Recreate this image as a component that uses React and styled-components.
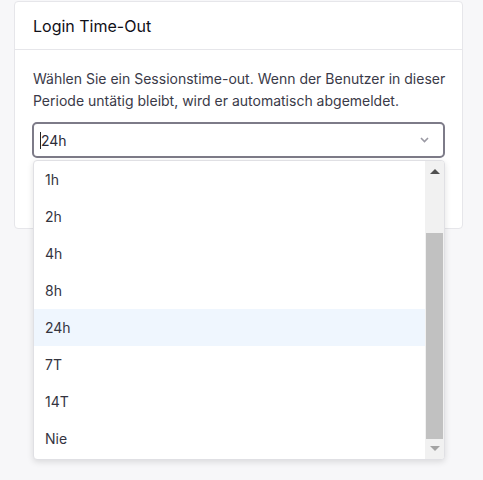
import React from "react";
import styled, { createGlobalStyle } from "styled-components";

const Global = createGlobalStyle`
  html, body { margin: 0; padding: 0; background: #f7f7f9; }
  body { font-family: Inter, "Noto Sans", sans-serif; color: #2b2b38; }
`;

const Page = styled.div`
  width: 483px;
  height: 480px;
  padding: 1px 20px 0 14px;
  box-sizing: border-box;
`;

const Card = styled.section`
  background: #fff;
  border: 1px solid #e6e6ea;
  border-radius: 4px;
  height: 228px;
  box-sizing: border-box;
`;

const CardHeader = styled.header`
  height: 47px;
  display: flex;
  align-items: center;
  padding: 0 18px;
  border-bottom: 1px solid #e6e6ea;
  font-size: 16px;
  font-weight: 400;
  color: #101018;
`;

const CardBody = styled.div`
  padding: 18px 17px 0 17px;
`;

const Text = styled.p`
  margin: 0 0 10px 1px;
  font-size: 14px;
  line-height: 22px;
  color: #3a3a48;
  white-space: nowrap;
`;

const TextLine = styled.span`
  display: block;
`;

const SelectWrap = styled.div`
  position: relative;
`;

const SelectBox = styled.div`
  height: 36px;
  box-sizing: border-box;
  border: 2px solid #7d7b88;
  border-radius: 5px;
  display: flex;
  align-items: center;
  padding: 0 14px 0 6px;
  font-size: 14px;
  color: #2b2b38;
`;

const Caret = styled.span`
  display: inline-block;
  width: 1px;
  height: 17px;
  background: #222;
`;

const Value = styled.span`
  flex: 1;
`;

const Dropdown = styled.div`
  position: absolute;
  left: 1px;
  top: 38px;
  width: 412px;
  height: 300px;
  box-sizing: border-box;
  background: #fff;
  border: 1px solid #e0e0e4;
  border-radius: 4px;
  box-shadow: 0 2px 6px rgba(0, 0, 0, 0.12);
  display: flex;
  overflow: hidden;
  z-index: 2;
`;

const List = styled.ul`
  flex: 1;
  list-style: none;
  margin: 0;
  padding: 0;
`;

const Item = styled.li`
  height: 37px;
  display: flex;
  align-items: center;
  padding-left: 11px;
  font-size: 14px;
  color: #34343f;
  background: ${(p) => (p.$active ? "#eff6fe" : "transparent")};
`;

const Scrollbar = styled.div`
  width: 19px;
  background: #f1f1f1;
  display: flex;
  flex-direction: column;
`;

const Arrow = styled.div`
  height: 20px;
  display: flex;
  align-items: center;
  justify-content: center;
`;

const Thumb = styled.div`
  width: 17px;
  margin-left: 1px;
  background: #c1c1c1;
  height: 206px;
  margin-top: ${(p) => p.$offset}px;
`;

const Spacer = styled.div`
  flex: 1;
`;

const options = ["1h", "2h", "4h", "8h", "24h", "7T", "14T", "Nie"];

export default function App() {
  return (
    <>
      <Global />
      <Page>
        <Card>
          <CardHeader>Login Time-Out</CardHeader>
          <CardBody>
            <Text>
              <TextLine>
                Wählen Sie ein Sessionstime-out. Wenn der Benutzer in dieser
              </TextLine>
              <TextLine>Periode untätig bleibt, wird er automatisch abgemeldet.</TextLine>
            </Text>
            <SelectWrap>
              <SelectBox>
                <Caret />
                <Value>24h</Value>
                <svg width="9" height="6" viewBox="0 0 9 6">
                  <path d="M1 1l3.5 3.5L8 1" fill="none" stroke="#9a99a3" strokeWidth="1.6" />
                </svg>
              </SelectBox>
              <Dropdown>
                <List>
                  {options.map((o) => (
                    <Item key={o} $active={o === "24h"}>
                      {o}
                    </Item>
                  ))}
                </List>
                <Scrollbar>
                  <Arrow>
                    <svg width="10" height="6" viewBox="0 0 10 6">
                      <path d="M0 6L5 1l5 5z" fill="#505050" />
                    </svg>
                  </Arrow>
                  <Thumb $offset={52} />
                  <Spacer />
                  <Arrow>
                    <svg width="10" height="6" viewBox="0 0 10 6">
                      <path d="M0 0l5 5 5-5z" fill="#a3a3a3" />
                    </svg>
                  </Arrow>
                </Scrollbar>
              </Dropdown>
            </SelectWrap>
          </CardBody>
        </Card>
      </Page>
    </>
  );
}
